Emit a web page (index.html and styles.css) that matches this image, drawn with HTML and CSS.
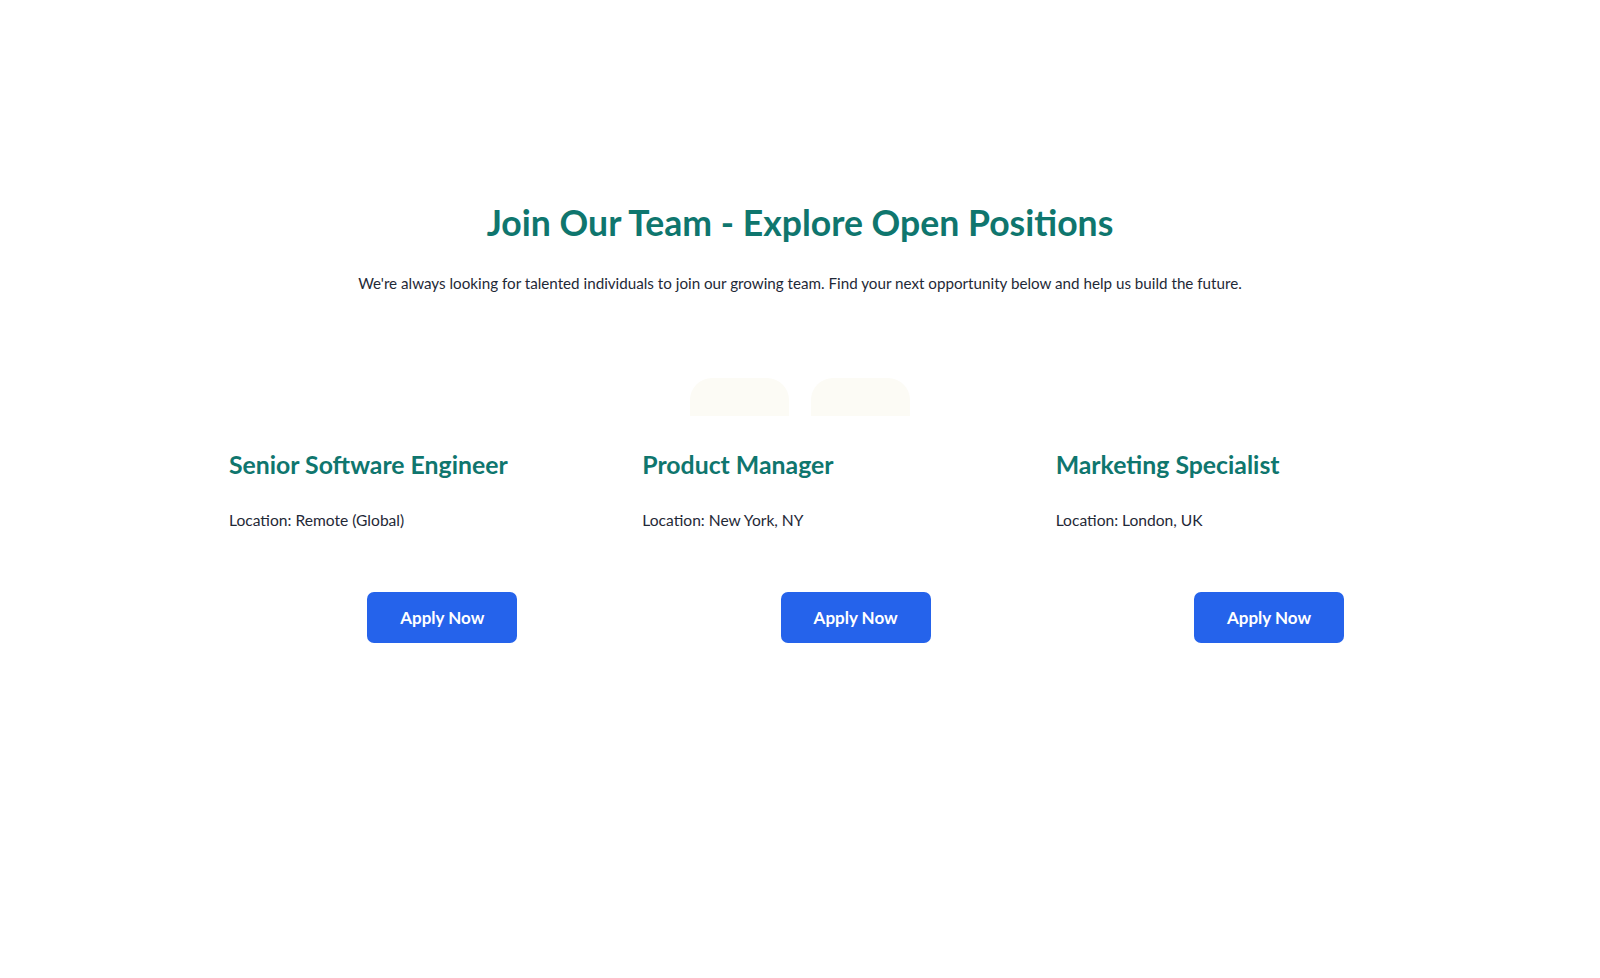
FILE: index.html
```html
<!DOCTYPE html>
<html lang="en">
<head>
    <meta charset="UTF-8">
    <title>Careers</title>
    <link rel="stylesheet" href="styles.css">
</head>
<body>

<section class="careers">
    <h1 class="careers-title">Join Our Team - Explore Open Positions</h1>
    <p class="careers-intro">We're always looking for talented individuals to join our growing team. Find your next opportunity below and help us build the future.</p>

    <div class="tabs">
        <span class="tab"></span>
        <span class="tab"></span>
    </div>

    <div class="jobs">
        <div class="job">
            <h3 class="job-title">Senior Software Engineer</h3>
            <p class="job-location">Location: Remote (Global)</p>
            <a class="apply-btn" href="#">Apply Now</a>
        </div>
        <div class="job">
            <h3 class="job-title">Product Manager</h3>
            <p class="job-location">Location: New York, NY</p>
            <a class="apply-btn" href="#">Apply Now</a>
        </div>
        <div class="job">
            <h3 class="job-title">Marketing Specialist</h3>
            <p class="job-location">Location: London, UK</p>
            <a class="apply-btn" href="#">Apply Now</a>
        </div>
    </div>
</section>

</body>
</html>
```

FILE: styles.css
```css
*{
    margin: 0;
    padding: 0;
    box-sizing: border-box;
}
body{
    background: #fff;
    font-family: 'Lato', 'Noto Sans', sans-serif;
    color: #1f2937;
}
.careers{
    max-width: 1200px;
    margin: 0 auto;
    padding-top: 201px;
}
.careers-title{
    text-align: center;
    color: #0f766e;
    font-size: 35.6px;
    font-weight: 700;
    line-height: 44px;
}
.careers-intro{
    text-align: center;
    font-size: 15.2px;
    line-height: 24px;
    margin-top: 26px;
}
.tabs{
    display: flex;
    justify-content: center;
    gap: 22px;
    margin-top: 83px;
}
.tab{
    width: 99px;
    height: 38px;
    background: #fcfbf5;
    border-radius: 22px 22px 0 0;
}
.jobs{
    display: grid;
    grid-template-columns: repeat(3, 1fr);
    gap: 40px;
    margin-top: 33px;
}
.job{
    display: flex;
    flex-direction: column;
    padding: 0 56px 0 29px;
}
.job-title{
    color: #0f766e;
    font-size: 24.8px;
    font-weight: 700;
    line-height: 32px;
}
.job-location{
    font-size: 15.6px;
    line-height: 24px;
    margin-top: 27px;
}
.apply-btn{
    align-self: flex-end;
    width: 150px;
    height: 51px;
    margin-top: 60px;
    background: #2563eb;
    color: #fff;
    border-radius: 7px;
    text-decoration: none;
    font-size: 17px;
    font-weight: 700;
    display: flex;
    align-items: center;
    justify-content: center;
}
```
